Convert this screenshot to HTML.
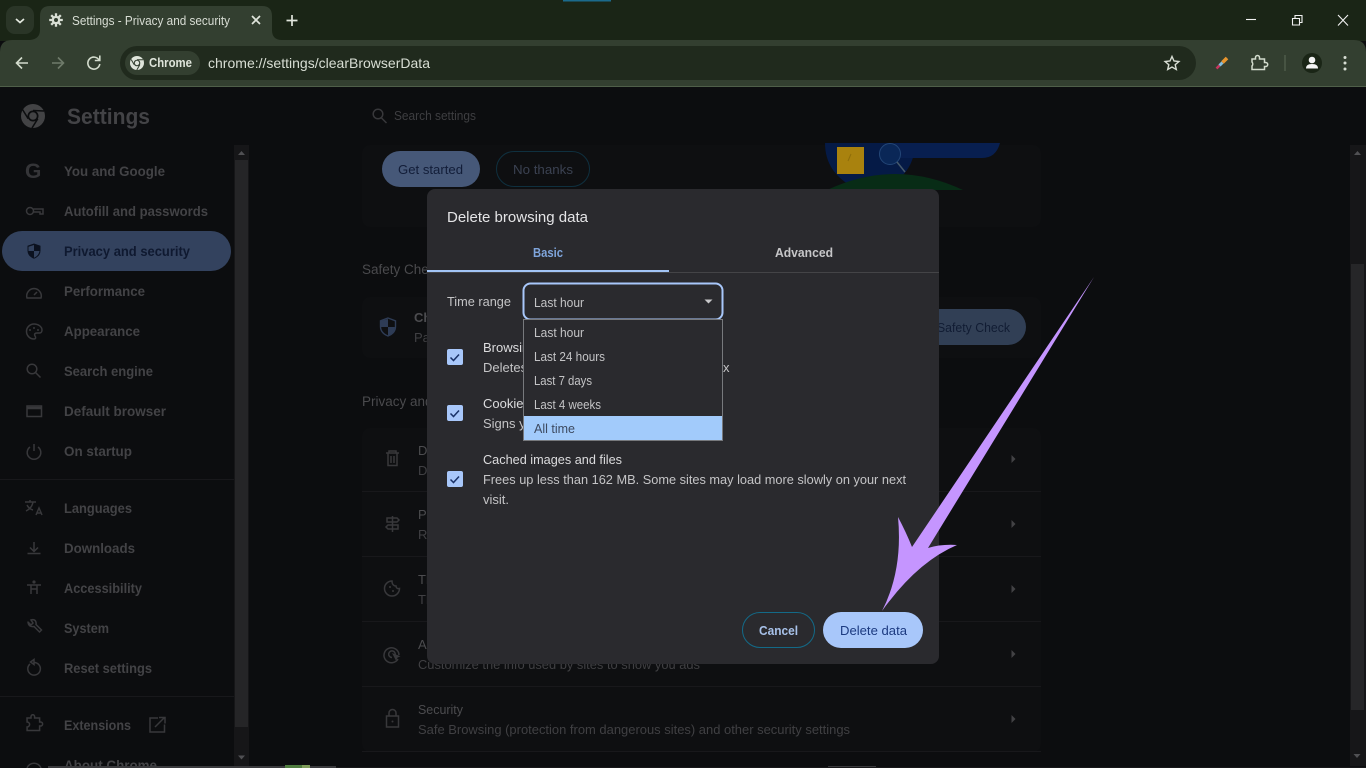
<!DOCTYPE html>
<html lang="en"><head><meta charset="utf-8"><title>Settings - Privacy and security</title>
<style>
html,body{margin:0;padding:0;background:#0c0d0f;overflow:hidden;width:1366px;height:768px}
svg{display:block}
text{font-family:"Liberation Sans",Arial,sans-serif;white-space:pre}
.nav{font-size:13.5px;font-weight:700;fill:#434346}
.rt{font-size:13px;fill:#4c4c4f}
.rs{font-size:13px;fill:#404043}
.ic{fill:none;stroke:#38383b;stroke-width:1.5}
.tb{fill:none;stroke:#d3dccd;stroke-width:1.6}
.dt{font-size:13px;fill:#c4c4c6}
.dh{font-size:13px;fill:#dcdcde}
.it{font-size:12.5px;fill:#c4c4c6}
.div{stroke:#18181b;stroke-width:1}
</style></head><body>
<svg width="1366" height="768" viewBox="0 0 1366 768" xmlns="http://www.w3.org/2000/svg">
<rect width="1366" height="768" fill="#0c0d0f"/>

<!-- title bar -->
<rect width="1366" height="41" fill="#1a2516"/>
<rect x="563" y="0" width="48" height="1.5" fill="#1b6a8c"/>
<rect x="6" y="6" width="28" height="28" rx="9" fill="#2a3527"/>
<path d="M16 19l4 3.5 4-3.5" fill="none" stroke="#e4e9e0" stroke-width="1.7"/>
<path d="M30 40q10-1 10-10V16q0-10 10-10h212q10 0 10 10v14q0 10 10 10z" fill="#333f30"/>
<g transform="translate(56,20)">
<path d="M0-6.800V6.800M-6.800 0H6.800M-4.800-4.800L4.800 4.800M4.800-4.800L-4.800 4.800" stroke="#d9dfd5" stroke-width="2.300"/>
<circle r="4.300" fill="#d9dfd5"/><circle r="2" fill="#333f30"/>
</g>
<text x="72" y="25" font-size="12.5" fill="#d8ddd4" textLength="158" lengthAdjust="spacingAndGlyphs">Settings - Privacy and security</text>
<path d="M252 16l8 8M260 16l-8 8" stroke="#e0e5dc" stroke-width="1.7"/>
<path d="M292 15v11M286.500 20.500h11" stroke="#e0e5dc" stroke-width="1.7"/>
<path d="M1246 19.500h10" stroke="#f2f2f2" stroke-width="1.1"/>
<path d="M1292.500 18.500h7v6.500h-7zM1295 18v-2.500h7v7h-2" fill="none" stroke="#f2f2f2" stroke-width="1.1"/>
<path d="M1338 15l10 10.500M1348 15l-10 10.500" stroke="#f2f2f2" stroke-width="1.1"/>

<!-- toolbar -->
<path d="M0 86V52q0-12 12-12h1342q12 0 12 12v34z" fill="#333f30"/>
<rect y="86" width="1366" height="1" fill="#4f5f49"/>
<rect x="120" y="46" width="1076" height="34" rx="17" fill="#202a1d"/>
<rect x="125" y="51" width="75" height="24" rx="12" fill="#333f30"/>
<path d="M28 63H17M22 57.500L16.500 63l5.500 5.500" class="tb"/>
<path d="M52 63h11M58 57.500l5.500 5.500-5.500 5.500" fill="none" stroke="#6f7b6a" stroke-width="1.6"/>
<path d="M99 60a6 6 0 1 0 .8 4" class="tb"/><path d="M99.800 55.500v5h-5" class="tb"/>
<g transform="translate(137,63)">
<circle r="7" fill="#dfe5db"/><circle r="3.300" fill="#333f30"/><circle r="2.200" fill="#dfe5db"/>
<path d="M0-3.300L6-3.300M-2.900 1.600L-5.800-3.500M2.900 1.600L-.2 7" stroke="#333f30" stroke-width="1"/>
</g>
<text x="149" y="67" font-size="12.500" font-weight="700" fill="#dfe5db" textLength="43" lengthAdjust="spacingAndGlyphs">Chrome</text>
<text x="208" y="68" font-size="14" fill="#d8ded4" textLength="222" lengthAdjust="spacingAndGlyphs">chrome://settings/clearBrowserData</text>
<path d="M1172 56.500l2 4.500 4.900.5-3.700 3.200 1.100 4.800-4.300-2.500-4.300 2.500 1.100-4.800-3.700-3.200 4.900-.5z" fill="none" stroke="#d8ded4" stroke-width="1.4"/>
<path d="M1216.500 68.500l3-3" stroke="#c9355f" stroke-width="2.600"/>
<path d="M1219.500 65.500l3-3" stroke="#83bde0" stroke-width="3"/>
<path d="M1222.500 62.500l4.500-4.500" stroke="#e8952e" stroke-width="3.600"/>
<path d="M1252 59h3.500v-1.500a2 2 0 0 1 4 0V59h5v3.500h1.200a2 2 0 0 1 0 4h-1.200V69.500h-12.500v-3.500a3 3 0 0 0 0-4z" fill="none" stroke="#d3dccd" stroke-width="1.5"/>
<rect x="1284.500" y="55" width="1" height="16" fill="#5b6856"/>
<circle cx="1312" cy="63" r="10" fill="#1a2516"/>
<circle cx="1312" cy="60" r="3.300" fill="#f4f4f4"/><path d="M1306 68.500q0-4.500 6-4.500t6 4.500z" fill="#f4f4f4"/>
<circle cx="1345" cy="57.500" r="1.500" fill="#d8ded4"/><circle cx="1345" cy="63" r="1.500" fill="#d8ded4"/><circle cx="1345" cy="69" r="1.500" fill="#d8ded4"/>

<!-- settings header -->
<g transform="translate(33,116)">
<circle r="12" fill="#434345"/><circle r="5.500" fill="#0c0d0f"/><circle r="3.800" fill="#434345"/>
<path d="M0-5.500L11-5M-4.800 2.700L-10.500-6.500M4.800 2.700L-1 12" stroke="#0c0d0f" stroke-width="1.500"/>
</g>
<text x="67" y="124" font-size="22" font-weight="700" fill="#434346" textLength="83" lengthAdjust="spacingAndGlyphs">Settings</text>
<circle cx="378" cy="114" r="4.800" class="ic"/><path d="M381.500 118l5 5" class="ic"/>
<text x="394" y="120" font-size="12.500" fill="#3e3e41" textLength="82" lengthAdjust="spacingAndGlyphs">Search settings</text>

<!-- sidebar -->
<rect x="2" y="231" width="229" height="40" rx="20" fill="#33425e"/>
<text x="25" y="178" font-size="21" font-weight="700" fill="#353538">G</text>
<circle cx="30" cy="211" r="3.500" class="ic"/><path d="M33.500 209h9.500v5h-3v-2h-6.500" class="ic"/>
<path d="M34 243.500l6.500 2.300v5q0 5.200-6.500 8-6.500-2.800-6.500-8v-5z" fill="#0b111f"/>
<path d="M34 245v6h-5.500v-4.200zM34 251h5.500q-.5 4.300-5.500 6.800z" fill="#33425e"/>
<path d="M27 298a7.500 7.500 0 0 1 7-9.500 7.500 7.500 0 0 1 7 9.500zM34 295l3-3" class="ic"/>
<path d="M34 324a7.500 7.500 0 1 0 0 15c2 0 2-2 1-3-1-2 0-3 2-3h2.500c2-0 2.500-2 2.500-3 0-3.500-4-6-8-6z" class="ic"/>
<circle cx="30" cy="330" r="1" fill="#38383b"/><circle cx="34" cy="328" r="1" fill="#38383b"/><circle cx="38" cy="330" r="1" fill="#38383b"/>
<circle cx="32" cy="369" r="4.800" class="ic"/><path d="M35.500 372.500l5 5" class="ic"/>
<rect x="27" y="406" width="14.500" height="10.500" class="ic"/><path d="M27 408h14.500" stroke="#38383b" stroke-width="2.500"/>
<path d="M30 447a6.800 6.800 0 1 0 8 0M34 444v7" class="ic"/>
<path d="M25 502h11M30 500v2M33 502q-1 6-7 9M27 505q2 4 6 5M36 515l3-7 3 7M37 513h4" class="ic"/>
<path d="M34 542v9M30 547.500l4 4 4-4M27.500 553.500h13" class="ic"/>
<circle cx="34" cy="582" r="1.600" fill="#38383b"/><path d="M27 585h14M31 585v9M37 585v9M31 589h6" class="ic"/>
<path d="M28 622l3 3 2-2-2-3q3-1 4.500 1 1 2 .5 3.500l5.500 5.500-2 2-5.500-5.500q-2 .5-4-.5-2-1.500-2-4.500z" class="ic"/>
<path d="M30 664a6.300 6.300 0 1 0 4-1.500M34 659.500v5l-3.500-2.500z" class="ic"/>
<path d="M27 718h4v-1.500a1.800 1.800 0 0 1 3.600 0V718h5v4h1a2 2 0 0 1 0 4h-1v4.500h-12.500V727a2.500 2.500 0 0 0 0-5z" class="ic"/>
<path d="M158 718h-8v14h14.500v-7.500M155 727l9.500-9.500M159 717.500h6v6" class="ic"/>
<path d="M27 768a7.500 7.500 0 0 1 14 0" class="ic" stroke-width="3"/>

<text class="nav" x="64" y="176" textLength="101" lengthAdjust="spacingAndGlyphs">You and Google</text>
<text class="nav" x="64" y="216" textLength="144" lengthAdjust="spacingAndGlyphs">Autofill and passwords</text>
<text x="64" y="256" font-size="13.500" font-weight="700" fill="#0f1930" textLength="126" lengthAdjust="spacingAndGlyphs">Privacy and security</text>
<text class="nav" x="64" y="296" textLength="81" lengthAdjust="spacingAndGlyphs">Performance</text>
<text class="nav" x="64" y="336" textLength="76" lengthAdjust="spacingAndGlyphs">Appearance</text>
<text class="nav" x="64" y="376" textLength="89" lengthAdjust="spacingAndGlyphs">Search engine</text>
<text class="nav" x="64" y="416" textLength="102" lengthAdjust="spacingAndGlyphs">Default browser</text>
<text class="nav" x="64" y="456" textLength="68" lengthAdjust="spacingAndGlyphs">On startup</text>
<text class="nav" x="64" y="513" textLength="68" lengthAdjust="spacingAndGlyphs">Languages</text>
<text class="nav" x="64" y="553" textLength="71" lengthAdjust="spacingAndGlyphs">Downloads</text>
<text class="nav" x="64" y="593" textLength="78" lengthAdjust="spacingAndGlyphs">Accessibility</text>
<text class="nav" x="64" y="633" textLength="45" lengthAdjust="spacingAndGlyphs">System</text>
<text class="nav" x="64" y="673" textLength="88" lengthAdjust="spacingAndGlyphs">Reset settings</text>
<text class="nav" x="64" y="730" textLength="67" lengthAdjust="spacingAndGlyphs">Extensions</text>
<text class="nav" x="64" y="770" textLength="93" lengthAdjust="spacingAndGlyphs">About Chrome</text>
<path class="div" d="M0 479.500H234M0 696.500H234"/>

<!-- left scrollbar -->
<rect x="234" y="145" width="15" height="621" fill="#161618"/>
<rect x="235" y="160" width="13" height="567" fill="#252527"/>
<path d="M238 155l3.500-4 3.500 4z" fill="#505053"/>
<path d="M238 755.500h7l-3.500 4z" fill="#505053"/>

<!-- right scrollbar -->
<rect x="1350" y="145" width="16" height="621" fill="#161618"/>
<rect x="1351" y="264" width="13" height="446" fill="#262628"/>
<path d="M1354 155l3.500-4 3.500 4z" fill="#505053"/>
<path d="M1353.500 754h7l-3.500 4z" fill="#505053"/>

<!-- bottom strip -->
<rect x="48" y="766" width="288" height="2" fill="#3a3a3d"/>
<rect x="285" y="765" width="17" height="3" fill="#4f7c3f"/>
<rect x="302" y="765" width="8" height="3" fill="#7f9c5a"/>
<rect x="828" y="766" width="48" height="2" fill="#3a3a3d"/>
<rect x="336" y="767" width="1030" height="1" fill="#18181a"/>

<!-- main first card -->
<rect x="362" y="145" width="679" height="82" rx="8" fill="#0e0f11"/>
<path d="M825 143h90q0 30-30 45h-30q-30-15-30-45z" fill="#051a46"/>
<path d="M827 190q68-32 136 0z" fill="#082c16"/>
<path d="M895 143h105q-4 15-18 15h-87z" fill="#081f50"/>
<circle cx="890" cy="154" r="10.500" fill="#0a2757" stroke="#234677" stroke-width="1"/>
<path d="M897 162l8 10" stroke="#46596a" stroke-width="1.500"/>
<rect x="837" y="147" width="27" height="27" fill="#a9820e"/>
<path d="M851 154l-3 7" stroke="#8f6e0a"/>
<rect x="382" y="151" width="98" height="36" rx="18" fill="#465878"/>
<text x="398" y="174" font-size="13" fill="#121d38" textLength="65" lengthAdjust="spacingAndGlyphs">Get started</text>
<rect x="496.500" y="151.500" width="93" height="35" rx="17.500" fill="none" stroke="#0f303f"/>
<text x="513" y="174" font-size="13" fill="#3b4252" textLength="60" lengthAdjust="spacingAndGlyphs">No thanks</text>

<text x="362" y="274" font-size="13.500" fill="#4a4a4d">Safety Check</text>
<rect x="362" y="297" width="679" height="61" rx="8" fill="#0e0f11"/>
<path d="M388 318l7.500 2.800v5.700q0 6.500-7.500 9.500-7.500-3-7.500-9.500v-5.700z" fill="#0e0f11" stroke="#2e3c56" stroke-width="1.400"/>
<path d="M388 319v8h-7v-6zM388 327h7q-.5 6-7 9z" fill="#2e3c56"/>
<text x="414" y="322" font-size="13" font-weight="700" fill="#4c4c4f">Check</text>
<text x="414" y="342" class="rs">Passwords</text>
<rect x="900" y="309" width="126" height="36" rx="18" fill="#313f55"/>
<text x="937" y="332" font-size="13" fill="#111c33" textLength="73" lengthAdjust="spacingAndGlyphs">Safety Check</text>

<text x="362" y="406" font-size="13.500" fill="#4a4a4d">Privacy and security</text>
<rect x="362" y="428" width="679" height="324" rx="8" fill="#0e0f11"/>
<path class="div" d="M362 491.500H1041M362 556.500H1041M362 621.500H1041M362 686.500H1041M362 751.500H1041"/>
<path d="M386 453h13M389 453v-2h7v2M388 453.500v12h9v-12M391 456v7M394 456v7" class="ic"/>
<path d="M392.500 516v16M387 518h10l2 2-2 2h-10zM398 525h-10l-2 2 2 2h10z" class="ic" stroke-width="1.300"/>
<path d="M392 581a7.500 7.500 0 1 0 7.500 7.500c-2 .5-3.500-.5-3.500-2.500-2 0-4-1.500-4-5z" class="ic"/><circle cx="390" cy="587" r="1" fill="#38383b"/><circle cx="393" cy="591" r="1" fill="#38383b"/>
<path d="M398 659a7.500 7.500 0 1 1 1-4M395 655.500a3.300 3.300 0 1 0-3 2" class="ic"/><path d="M392 653l8.500 3.200-3 1.400-1.500 3.200z" fill="#38383b"/>
<rect x="386.500" y="716" width="12" height="11" class="ic"/><path d="M389 716v-3a3.500 3.500 0 0 1 7 0v3" class="ic"/><circle cx="392.500" cy="721.500" r="1" fill="#38383b"/>
<path d="M1011.500 455l4 4-4 4zM1011.500 520l4 4-4 4zM1011.500 585l4 4-4 4zM1011.500 650l4 4-4 4zM1011.500 715l4 4-4 4z" fill="#424245"/>
<text x="418" y="455" class="rt">Delete browsing data</text><text x="418" y="475" class="rs">Delete history</text>
<text x="418" y="519" class="rt">Privacy</text><text x="418" y="539" class="rs">Review</text>
<text x="418" y="584" class="rt">Third</text><text x="418" y="604" class="rs">Third</text>
<text x="418" y="649" class="rt">Ads</text>
<text x="418" y="669" class="rs" textLength="282" lengthAdjust="spacingAndGlyphs">Customize the info used by sites to show you ads</text>
<text x="418" y="714" class="rt" textLength="45" lengthAdjust="spacingAndGlyphs">Security</text>
<text x="418" y="734" class="rs" textLength="432" lengthAdjust="spacingAndGlyphs">Safe Browsing (protection from dangerous sites) and other security settings</text>

<!-- dialog -->
<rect x="427" y="189" width="512" height="475" rx="8" fill="#2a2a2e"/>
<text x="447" y="222" font-size="14.500" fill="#e4e4e6" textLength="141" lengthAdjust="spacingAndGlyphs">Delete browsing data</text>
<text x="533" y="257" font-size="12.500" font-weight="700" fill="#7fa5dc" textLength="30" lengthAdjust="spacingAndGlyphs">Basic</text>
<text x="775" y="257" font-size="12.500" font-weight="700" fill="#c6c6c8" textLength="58" lengthAdjust="spacingAndGlyphs">Advanced</text>
<rect x="427" y="272" width="512" height="1" fill="#444447"/>
<rect x="427" y="270" width="242" height="2" fill="#a2c4f5"/>
<text x="447" y="306" class="dt" textLength="64" lengthAdjust="spacingAndGlyphs">Time range</text>
<rect x="523.500" y="283.500" width="199" height="36" rx="7" fill="#2a2a2e" stroke="#a8c7fa" stroke-width="2"/>
<text x="534" y="307" class="it" textLength="50" lengthAdjust="spacingAndGlyphs">Last hour</text>
<path d="M704.500 299.500h8l-4 4z" fill="#c8c8ca"/>

<g fill="#a8c7fa">
<rect x="447" y="349" width="16" height="16" rx="2"/>
<rect x="447" y="405" width="16" height="16" rx="2"/>
<rect x="447" y="471" width="16" height="16" rx="2"/>
</g>
<path d="M450.500 357.500l3 3 5.500-6M450.500 413.500l3 3 5.500-6M450.500 479.500l3 3 5.500-6" fill="none" stroke="#1a3268" stroke-width="1.500"/>
<text x="483" y="352" class="dh">Browsing history</text>
<text x="483" y="372" class="dt">Deletes</text>
<text x="723" y="372" class="dt">x</text>
<text x="483" y="408" class="dh">Cookies</text>
<text x="483" y="428" class="dt">Signs you</text>
<text x="483" y="464" class="dh" textLength="139" lengthAdjust="spacingAndGlyphs">Cached images and files</text>
<text x="483" y="484" class="dt" textLength="423" lengthAdjust="spacingAndGlyphs">Frees up less than 162 MB. Some sites may load more slowly on your next</text>
<text x="483" y="504" class="dt" textLength="26" lengthAdjust="spacingAndGlyphs">visit.</text>

<!-- dropdown -->
<rect x="523.500" y="319.500" width="199" height="121" fill="#2a2a2e" stroke="#77797d"/>
<rect x="524" y="416" width="198" height="24" fill="#a2cbfb"/>
<text x="534" y="337" class="it" textLength="50" lengthAdjust="spacingAndGlyphs">Last hour</text>
<text x="534" y="361" class="it" textLength="71" lengthAdjust="spacingAndGlyphs">Last 24 hours</text>
<text x="534" y="385" class="it" textLength="58" lengthAdjust="spacingAndGlyphs">Last 7 days</text>
<text x="534" y="409" class="it" textLength="67" lengthAdjust="spacingAndGlyphs">Last 4 weeks</text>
<text x="534" y="433" font-size="12.500" fill="#3d4a60" textLength="41" lengthAdjust="spacingAndGlyphs">All time</text>

<!-- buttons -->
<rect x="742.500" y="612.500" width="72" height="35" rx="17.500" fill="none" stroke="#136a88"/>
<text x="759" y="635" font-size="13" font-weight="700" fill="#a8c2ea" textLength="39" lengthAdjust="spacingAndGlyphs">Cancel</text>
<rect x="823" y="612" width="100" height="36" rx="18" fill="#a8c7fa"/>
<text x="840" y="635" font-size="13" fill="#1c3a80" textLength="67" lengthAdjust="spacingAndGlyphs">Delete data</text>

<!-- purple arrow -->
<path d="M1094 277L928 548Q941 544 957 545Q917 562 882 611Q903 570 898 517Q906 532 912 547Z" fill="#c595ff"/>
</svg>
</body></html>
